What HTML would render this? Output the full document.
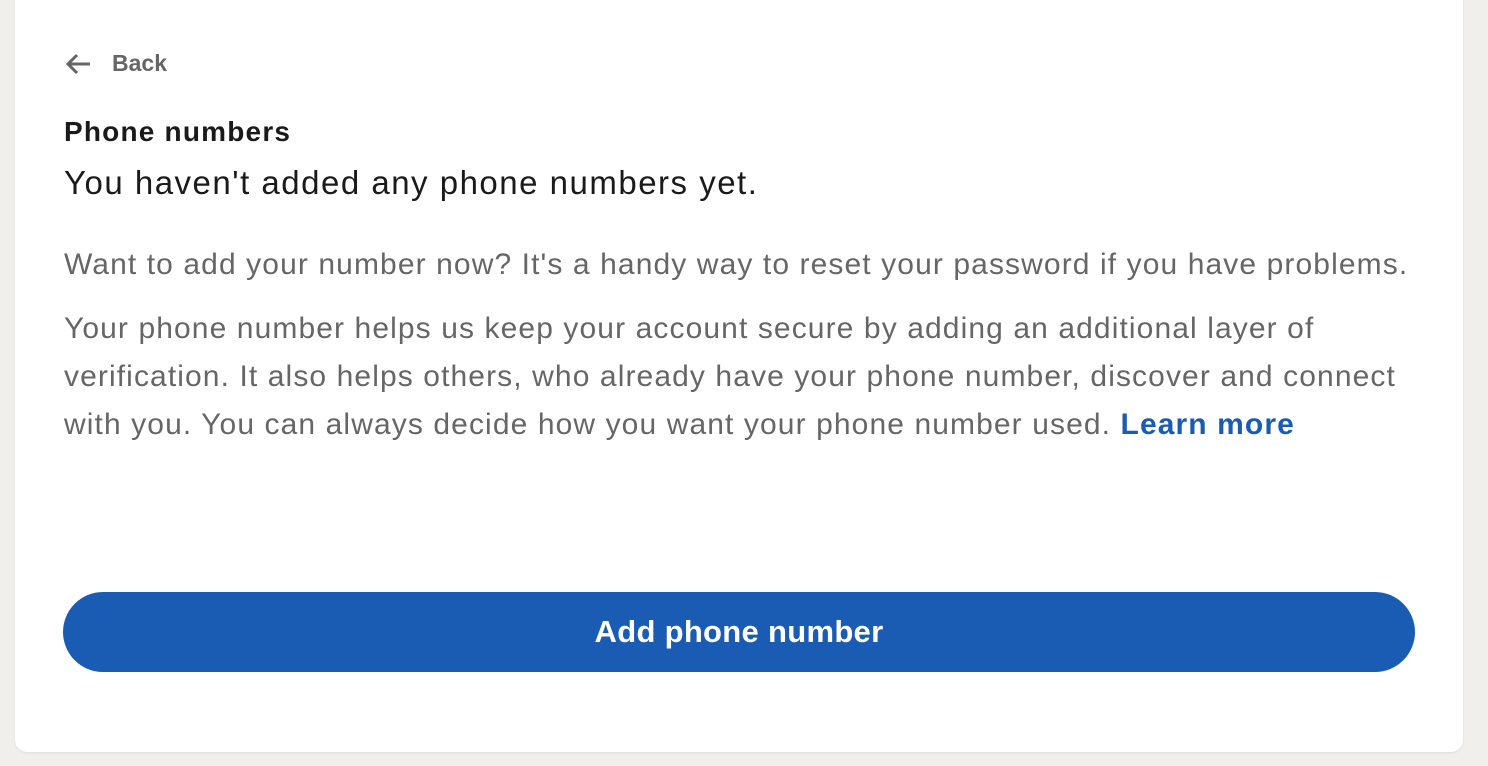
<!DOCTYPE html>
<html><head><style>
body{margin:0;background:#f0efec;width:1488px;height:766px;overflow:hidden;font-family:"Liberation Sans",sans-serif;}
.card{position:absolute;left:15px;top:-12px;width:1448px;height:764px;background:#fff;border-radius:12px;box-shadow:0 1px 2px rgba(0,0,0,.08);}
.abs{position:absolute;white-space:nowrap;}
.back{left:64px;top:50px;font-size:23px;font-weight:bold;color:#666;display:flex;align-items:center;}
h1{left:64px;top:116px;margin:0;font-size:28px;font-weight:bold;color:#1a1a1a;letter-spacing:1.2px}
h2{left:64px;top:164px;margin:0;font-size:33px;font-weight:normal;color:#1a1a1a;letter-spacing:1.5px}
.p{left:64px;font-size:30px;color:#666;line-height:48px;letter-spacing:1.1px}
.p a{color:#1a5bb4;font-weight:bold;text-decoration:none}
.btn{position:absolute;left:63px;top:592px;width:1352px;height:80px;background:#1a5bb4;border-radius:40px;color:#fff;font-size:31px;font-weight:bold;display:flex;align-items:center;justify-content:center;letter-spacing:0.3px}
</style></head><body>
<div class="card"></div>
<div class="abs back"><svg width="28" height="24" viewBox="0 0 28 24" style="margin-right:20px"><path d="M26 12H4M13 3L4 12l9 9" stroke="#666" stroke-width="3" fill="none"/></svg>Back</div>
<h1 class="abs">Phone numbers</h1>
<h2 class="abs">You haven't added any phone numbers yet.</h2>
<div class="abs p" style="top:241px">Want to add your number now? It's a handy way to reset your password if you have problems.</div>
<div class="abs p" style="top:305px">Your phone number helps us keep your account secure by adding an additional layer of<br>verification. It also helps others, who already have your phone number, discover and connect<br>with you. You can always decide how you want your phone number used. <a>Learn more</a></div>
<div class="btn">Add phone number</div>
</body></html>
